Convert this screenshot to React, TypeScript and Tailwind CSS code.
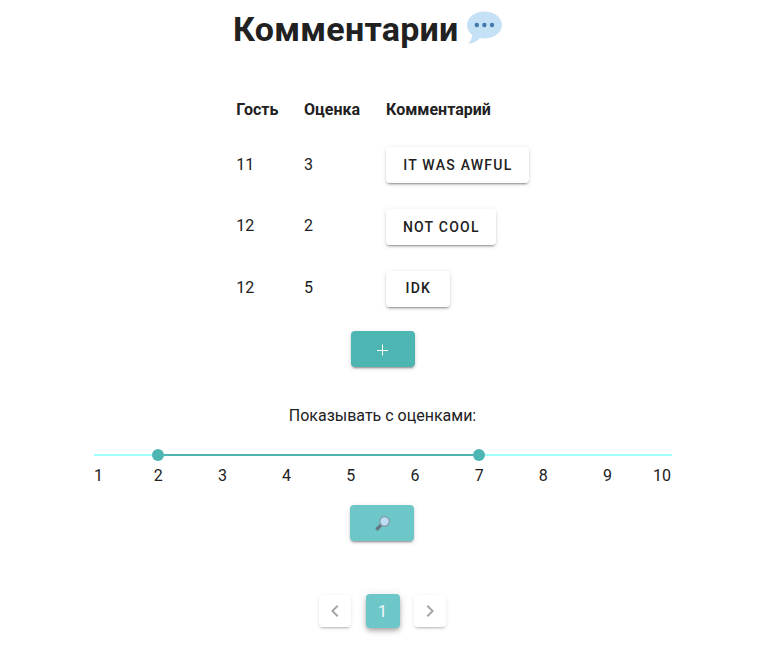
import React from "react";

const rows = [
  { guest: "11", score: "3", text: "It was awful", w: "w-[143px]", line: "h-[62px]", push: "" },
  { guest: "12", score: "2", text: "Not cool", w: "w-[110px]", line: "h-[61px] pb-[2px]", push: "mt-px" },
  { guest: "12", score: "5", text: "Idk", w: "w-16", line: "h-[62px]", push: "mt-px pb-px" },
];

const raised =
  "shadow-[0_3px_1px_-2px_rgba(0,0,0,0.2),0_2px_2px_0_rgba(0,0,0,0.14),0_1px_5px_0_rgba(0,0,0,0.12)]";

function SpeechBubble() {
  return (
    <svg width="36" height="36" viewBox="0 0 36 36" className="mt-[-3px] ml-[7px]">
      <path
        fill="#C5E1F6"
        d="M18.5 1.5C9 1.5 1 7.5 1 15c0 4.3 2 7.6 5.2 10C5.9 28 4.6 31.500 2.300 33.800c5.500-.3 9.200-2.800 11.600-5.700 1.500.3 3 .4 4.600.4 9.700 0 17.500-6 17.500-13.500s-7.800-13.500-17.500-13.500z"
      />
      <g fill="#4279AB">
        <circle cx="10.8" cy="15" r="2.2" />
        <circle cx="18.4" cy="15" r="2.2" />
        <circle cx="26" cy="15" r="2.2" />
      </g>
    </svg>
  );
}

function Magnifier() {
  return (
    <svg width="15" height="15" viewBox="0 0 36 36">
      <path fill="#9AAAB4" d="M17 17l3 3-5 5-4-4z" />
      <path fill="#66757F" d="M12 19l5 5-9 10c-1 1-3 1-4 0l-2-2c-1-1-1-3 0-4z" />
      <circle cx="23" cy="13" r="13" fill="#8899A6" />
      <circle cx="23" cy="13" r="10" fill="#BBDDF5" />
    </svg>
  );
}

function Chevron({ d }: { d: string }) {
  return (
    <svg width="24" height="24" viewBox="0 0 24 24" fill="#a6a6a6">
      <path d={d} />
    </svg>
  );
}

export default function App() {
  return (
    <main className="flex h-[668px] w-[774px] flex-col bg-white font-['Roboto',sans-serif] text-base text-[#212121]">
      <h1 className="ml-[233px] flex h-[58px] items-center text-[34px] font-bold leading-[58px] tracking-[0.25px]">
        Комментарии
        <SpeechBubble />
      </h1>
      <div className="ml-[236px] mt-[27px] grid grid-cols-[68px_82px_160px] items-center">
        <b className="h-[49px] pl-[0.25px] leading-[49px]">Гость</b>
        <b className="h-[49px] leading-[49px]">Оценка</b>
        <b className="h-[49px] leading-[49px]">Комментарий</b>
        {rows.map((r) => (
          <React.Fragment key={r.text}>
            <span className={`flex items-center pl-[0.25px] ${r.line}`}>{r.guest}</span>
            <span className={`flex items-center ${r.line}`}>{r.score}</span>
            <button
              className={`h-9 rounded pl-[0.7px] text-sm font-medium uppercase tracking-[1.25px] ${r.w} ${r.push} ${raised}`}
            >
              {r.text}
            </button>
          </React.Fragment>
        ))}
      </div>
      <button className={`ml-[351px] mt-[12px] flex h-9 w-16 items-center justify-center rounded bg-[#4db6b2] text-white ${raised}`}>
        <svg width="12" height="12" viewBox="0 0 12 12" stroke="currentColor" className="mt-[2px] mr-[2px]">
          <path d="M6.5 .5v11M1 6.5h11" />
        </svg>
      </button>
      <p className="mt-[37px] w-[765px] text-center leading-6">Показывать с оценками:</p>
      <div className="ml-[94px] mt-[19px] flex h-4 w-[578px] items-center">
        <div className="h-0.5 w-[58px] bg-[#a0ffff]" />
        <div className="h-3 w-3 rounded-full bg-[#4db6b2]" />
        <div className="h-0.5 w-[309px] bg-[#4db6b2]" />
        <div className="h-3 w-3 rounded-full bg-[#4db6b2]" />
        <div className="h-0.5 flex-1 bg-[#a0ffff]" />
      </div>
      <div className="ml-[94px] mt-px flex w-[578px] leading-6">
        <span className="w-[32.1px]">1</span>
        {[2, 3, 4, 5, 6, 7, 8, 9].map((n) => (
          <span key={n} className="w-[64.2px] text-center">{n}</span>
        ))}
        <span className="w-[32.1px] pr-[0.6px] text-right">10</span>
      </div>
      <button className={`ml-[350px] mt-[17px] flex h-9 w-16 items-center justify-center rounded bg-[#6dc6c8] ${raised}`}>
        <Magnifier />
      </button>
      <nav className="ml-[319px] mt-[53px] flex items-center">
        <button className="flex h-8 w-8 items-center justify-center rounded shadow-[0_3px_1px_-2px_rgba(0,0,0,0.12),0_2px_2px_0_rgba(0,0,0,0.084),0_1px_5px_0_rgba(0,0,0,0.072)]">
          <Chevron d="M15.410 16.580L10.830 12l4.580-4.590L14 6l-6 6 6 6 1.410-1.420z" />
        </button>
        <button className="ml-[15px] h-[34px] w-[34px] rounded bg-[#6dc6c8] pt-px pr-px text-white/90 shadow-[0_2px_4px_-1px_rgba(0,0,0,0.2),0_4px_5px_0_rgba(0,0,0,0.14),0_1px_10px_0_rgba(0,0,0,0.12)]">
          1
        </button>
        <button className="ml-[14px] flex h-8 w-8 items-center justify-center rounded shadow-[0_3px_1px_-2px_rgba(0,0,0,0.12),0_2px_2px_0_rgba(0,0,0,0.084),0_1px_5px_0_rgba(0,0,0,0.072)]">
          <Chevron d="M8.590 16.580L13.170 12 8.590 7.410 10 6l6 6-6 6-1.410-1.420z" />
        </button>
      </nav>
    </main>
  );
}
